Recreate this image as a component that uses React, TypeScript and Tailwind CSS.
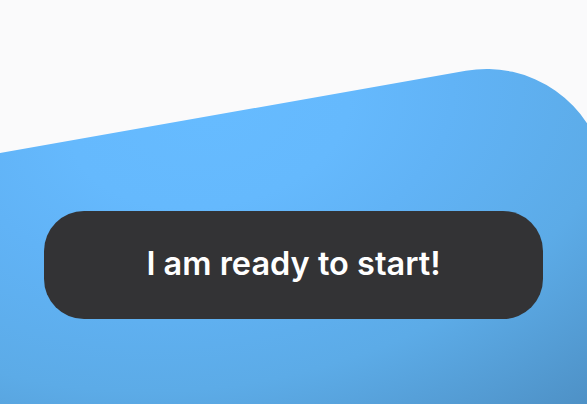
import React from 'react';

export default function App() {
  return (
    <div className="relative h-[404px] w-full overflow-hidden bg-[#fafafb] font-['Inter',sans-serif]">
      {/* tilted blue card behind the button */}
      <div className="absolute right-[3px] top-[50px] h-[600px] w-[900px] origin-top-right -rotate-10 rounded-[120px] bg-[radial-gradient(ellipse_700px_450px_at_520px_0px,#66bbff_0%,#65b9fd_20%,#61b3f6_35%,#5cabe7_60%,#4e91c6_90%,#4a8bbf_100%)]" />

      <div className="relative px-[44px] pt-[211px]">
        <button className="flex h-[108px] w-full items-center justify-center rounded-[40px] bg-[#333335] pb-[2px] text-[32.5px] font-semibold text-white">
          I am ready to start!
        </button>
      </div>
    </div>
  );
}
